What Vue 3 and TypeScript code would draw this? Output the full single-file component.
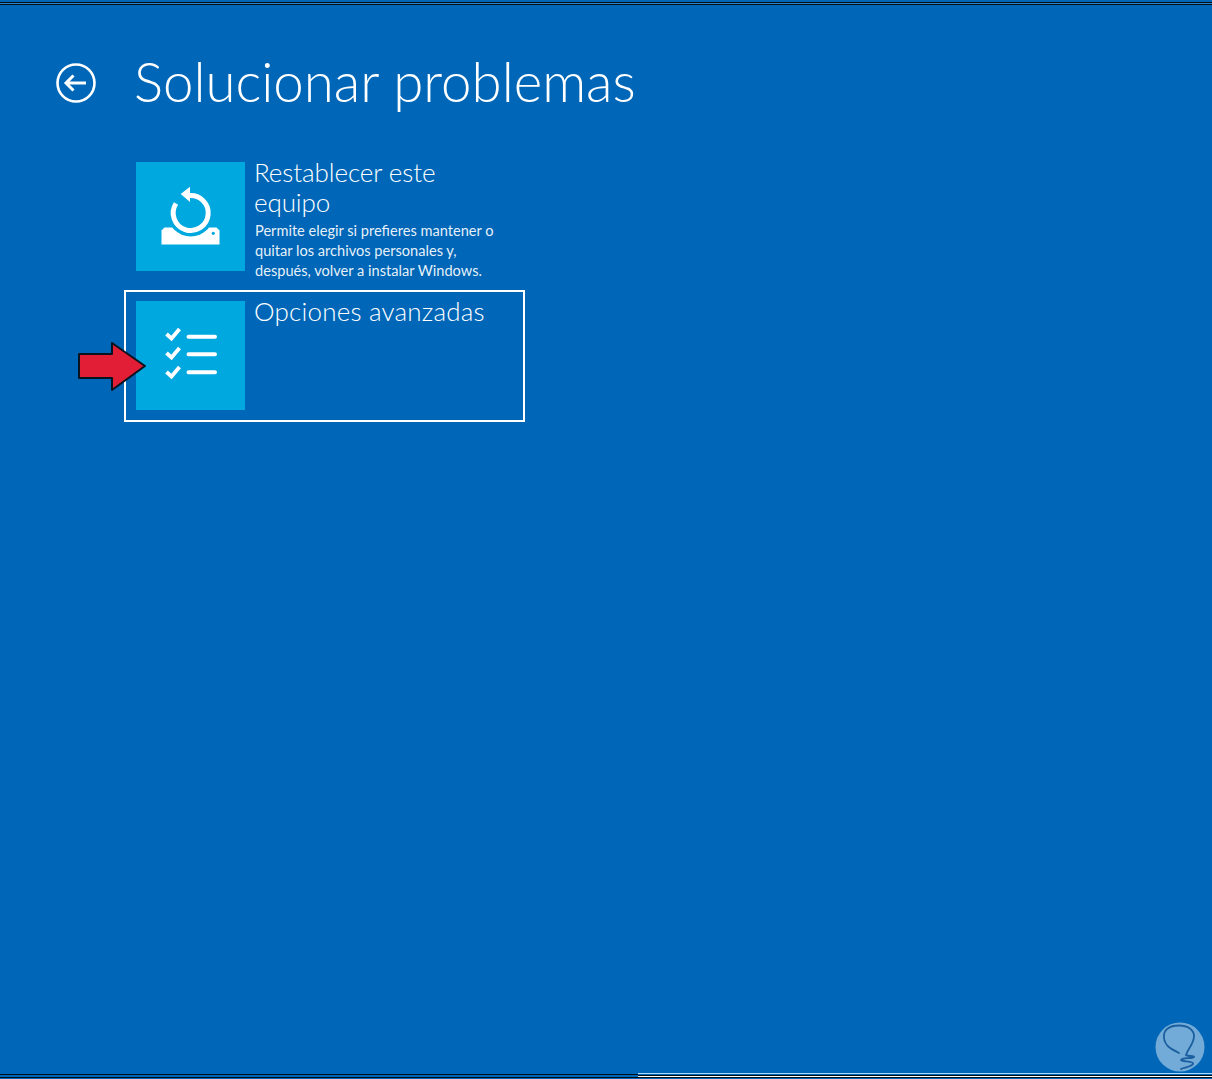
<script setup lang="ts">
const title = 'Solucionar problemas'
</script>

<template>
  <main class="screen">
    <div class="edge-top"></div>
    <header class="head">
      <svg class="back" width="42" height="42" viewBox="0 0 42 42" fill="none" stroke="#fff" aria-label="Atrás">
        <circle cx="21" cy="21" r="18.5" stroke-width="2.6" />
        <path d="M11 21H31M18.500 13.500L11 21L18.500 28.500" stroke-width="3" />
      </svg>
      <h1 class="title">{{ title }}</h1>
    </header>

    <section class="options">
      <article class="option">
        <div class="tile">
          <svg width="109" height="109" viewBox="0 0 109 109">
            <path d="M25.500 82.500V68.500L28.500 65.500H80.500L83.500 68.500V82.500Z" fill="#fff" />
            <circle cx="54.700" cy="51" r="23.500" fill="#00a8e0" />
            <path d="M52 33.700A17.500 17.500 0 1 1 40 41.500" fill="none" stroke="#fff" stroke-width="5" />
            <path d="M44.700 32L54 24.700V40Z" fill="#fff" />
            <circle cx="77.300" cy="71.300" r="1.600" fill="#00a8e0" />
          </svg>
        </div>
        <div class="copy">
          <h2>Restablecer este equipo</h2>
          <p>Permite elegir si prefieres mantener o quitar los archivos personales y, después, volver a instalar Windows.</p>
        </div>
      </article>

      <article class="option selected">
        <div class="tile">
          <svg width="109" height="109" viewBox="0 0 109 109" fill="none" stroke="#fff">
            <path d="M30.500 33L35.500 37.500L43.500 28M30.500 52L35.500 56.500L43.500 47M30.500 71L35.500 75.500L43.500 66" stroke-width="3.800" />
            <path d="M52.500 35.700H79M52.500 53.300H79M52.500 71.300H79" stroke-width="4" stroke-linecap="round" />
          </svg>
        </div>
        <div class="copy">
          <h2>Opciones avanzadas</h2>
        </div>
        <svg class="arrow" width="70" height="52" viewBox="0 0 70 52">
          <path d="M2 13H35V2L68 25L35 49V37H2Z" fill="#e21e36" stroke="#07141f" stroke-width="2" stroke-linejoin="round" />
        </svg>
      </article>
    </section>

    <svg class="mark" width="50" height="50" viewBox="0 0 50 50">
      <circle cx="25" cy="25" r="24.500" fill="#fff" opacity=".45" />
      <path d="M24 31C16 27 10 24 9 16C8 8 14 3.500 24 3.500C33 3.500 39 8 39 14C39 22 33 26 31 33C33 35 39 33 39 35C37 37 26 35 26 38C28 40 39 39 38 42C36 45 30 45 26 47" fill="none" stroke="#1b5f9f" stroke-width="1.800" stroke-linecap="round" />
    </svg>

    <div class="edge-bottom">
      <div class="bottom-left"></div>
      <div class="bottom-right"></div>
    </div>
  </main>
</template>

<style scoped>
.screen {
  position: relative;
  box-sizing: border-box;
  width: 1212px;
  height: 1079px;
  padding-top: 5px;
  overflow: hidden;
  background: #0067b8;
  color: #fff;
  font-family: "Lato", "Open Sans", "Liberation Sans", sans-serif;
  font-weight: 300;
}

.edge-top {
  position: absolute;
  top: 2px;
  left: 0;
  right: 0;
  box-sizing: border-box;
  height: 3px;
  border-top: 1px solid #020d16;
  border-bottom: 1px solid #020d16;
  background: #2b86cc;
}

.edge-bottom {
  position: absolute;
  left: 0;
  right: 0;
  bottom: 0;
  display: flex;
  height: 7px;
}

.bottom-left {
  width: 638px;
  background: linear-gradient(#0067b8 0 2px, #020d16 2px 3px, #0067b8 3px 5px, #020d16 5px 6px, #0067b8 6px);
}

.bottom-right {
  flex: 1;
  background: linear-gradient(#0067b8 0 1px, #a9dcf5 1px 2px, #0067b8 2px 3px, #020d16 3px 4px, #fff 4px 5px, #020d16 5px 6px, #0067b8 6px);
}

.head {
  display: flex;
  align-items: center;
  height: 110px;
  padding-left: 55px;
  gap: 37px;
  margin-top: 23px;
}

.back {
  flex: none;
  margin-top: -1px;
}

.title {
  margin: -4px 0 0;
  font-size: 54.600px;
  font-weight: 300;
  line-height: 60px;
  white-space: nowrap;
}

.options {
  display: flex;
  flex-direction: column;
  gap: 17px;
  width: 401px;
  margin-left: 124px;
  margin-top: 24px;
}

.option {
  position: relative;
  box-sizing: border-box;
  display: flex;
  gap: 9px;
  width: 401px;
  padding: 0 12px;
}

.option.selected {
  height: 132px;
  padding: 9px 10px 10px;
  border: 2px solid #fff;
  margin-top: -8px;
}

.tile {
  flex: none;
  width: 109px;
  height: 109px;
  background: #00a8e0;
}

.tile svg {
  display: block;
}

.copy {
  width: 250px;
  margin-top: -5px;
}

h2 {
  margin: 0;
  font-size: 26px;
  font-weight: 300;
  line-height: 30px;
  letter-spacing: -.1px;
}

.selected h2 {
  letter-spacing: .2px;
}

p {
  margin: 4px 0 0 1px;
  color: rgba(255, 255, 255, .92);
  font-size: 14.600px;
  font-weight: 400;
  line-height: 20px;
}

.arrow {
  position: absolute;
  left: -49px;
  top: 49px;
}

.mark {
  position: absolute;
  right: 7px;
  bottom: 7px;
}
</style>
